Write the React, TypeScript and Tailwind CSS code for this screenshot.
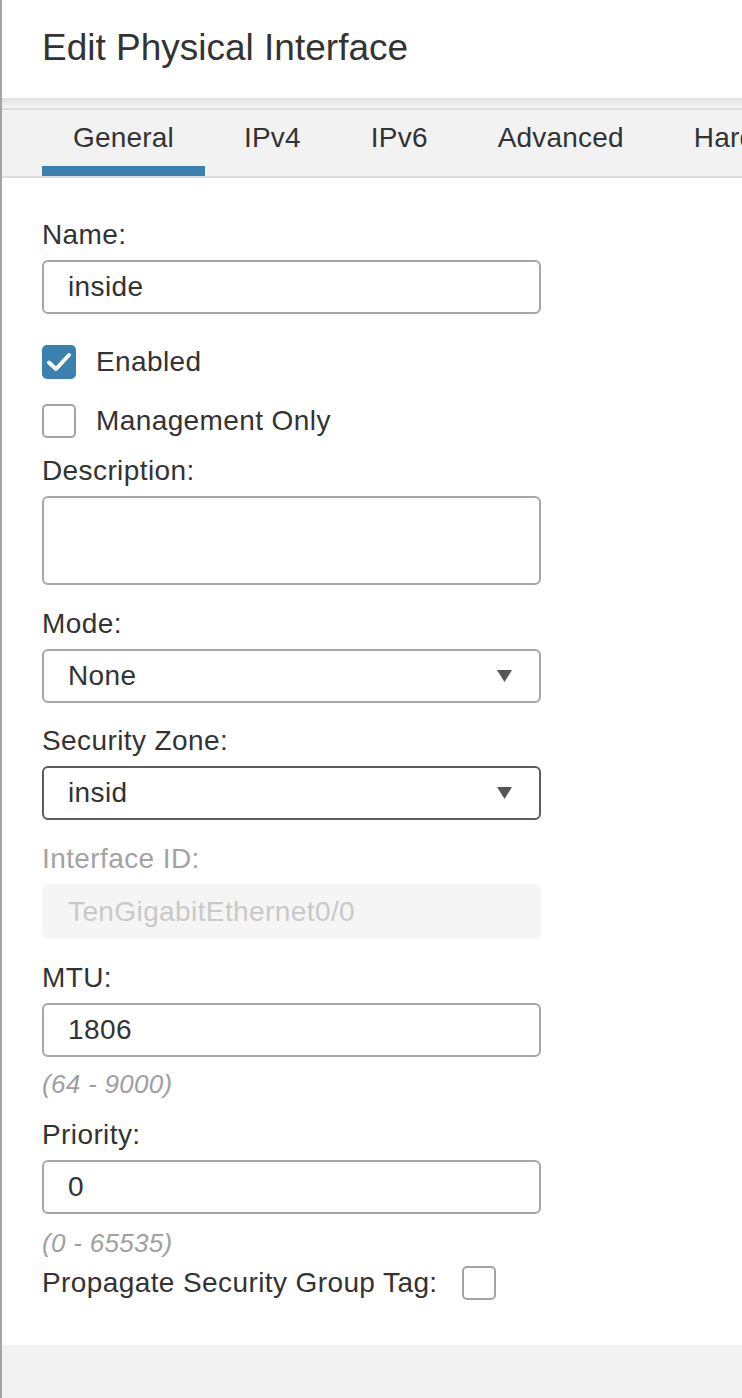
import React from "react";

const tabs = ["General", "IPv4", "IPv6", "Advanced", "Hardware Configuration"];

const Label = ({ children, muted }: { children: React.ReactNode; muted?: boolean }) => (
  <div
    className={`text-[28px] leading-[28px] tracking-[0.4px] mb-[11px] ${
      muted ? "text-[#a3a3a3]" : "text-[#333]"
    }`}
  >
    {children}
  </div>
);

const TextBox = ({ value }: { value: string }) => (
  <div className="w-[499px] h-[54px] border-2 border-[#a6a6a6] rounded-[6px] flex items-center px-[24px] text-[28px] leading-[28px] text-[#333] tracking-[0.4px]">
    {value}
  </div>
);

const Select = ({ value, dark }: { value: string; dark?: boolean }) => (
  <div
    className={`w-[499px] h-[54px] border-2 rounded-[6px] flex items-center justify-between pl-[24px] pr-[27px] text-[28px] leading-[28px] text-[#333] tracking-[0.4px] ${
      dark ? "border-[#5c5c5c]" : "border-[#a6a6a6]"
    }`}
  >
    <span>{value}</span>
    <svg width="15" height="12" viewBox="0 0 15 12">
      <path d="M0 0 L15 0 L7.5 12 Z" fill="#555" />
    </svg>
  </div>
);

const Hint = ({ children }: { children: React.ReactNode }) => (
  <div className="text-[26px] leading-[26px] italic text-[#a0a0a0] tracking-[0.3px]">{children}</div>
);

const CheckBox = ({ checked }: { checked?: boolean }) =>
  checked ? (
    <div className="w-[34px] h-[34px] rounded-[5px] bg-[#3a81b0] flex items-center justify-center">
      <svg width="26" height="22" viewBox="0 0 26 22">
        <path d="M3 11.5 L10 18 L23 4" fill="none" stroke="#fff" strokeWidth="4" strokeLinecap="round" strokeLinejoin="round" />
      </svg>
    </div>
  ) : (
    <div className="w-[34px] h-[34px] rounded-[5px] border-2 border-[#a3a3a3] bg-white" />
  );

const App = () => {
  return (
    <div
      className="w-[742px] h-[1398px] bg-white border-l-2 border-[#a5a5a5] flex flex-col overflow-hidden"
      style={{ fontFamily: '"Liberation Sans", Arial, sans-serif' }}
    >
      {/* header */}
      <div className="h-[98px] pl-[40px] pt-[29px] bg-white">
        <h1 className="text-[37px] leading-[37px] text-[#333]">Edit Physical Interface</h1>
      </div>
      <div className="h-[10px] bg-linear-to-b from-[#e1e1e1] to-[#f6f6f6]" />

      {/* tabs */}
      <div className="border-t-2 border-b-2 border-[#dcdcdc] bg-[#f2f2f2] pl-[40px] flex gap-[8px] whitespace-nowrap overflow-hidden">
        {tabs.map((t, i) => (
          <div key={t} className="flex flex-col items-stretch shrink-0">
            <div className="px-[31px] pt-[14px] text-[28px] leading-[28px] text-[#333] tracking-[0.2px]">{t}</div>
            <div className={`mt-[14px] h-[10px] ${i === 0 ? "bg-[#3a81b0]" : ""}`} />
          </div>
        ))}
      </div>

      {/* form */}
      <div className="flex-1 pl-[40px] pt-[43px]">
        <Label>Name:</Label>
        <TextBox value="inside" />

        <div className="mt-[31px] flex items-center gap-[20px] text-[28px] leading-[34px] text-[#333] tracking-[0.4px]">
          <CheckBox checked />
          <span>Enabled</span>
        </div>
        <div className="mt-[25px] flex items-center gap-[20px] text-[28px] leading-[34px] text-[#333] tracking-[0.4px]">
          <CheckBox />
          <span>Management Only</span>
        </div>

        <div className="mt-[19px]">
          <Label>Description:</Label>
          <div className="w-[499px] h-[89px] border-2 border-[#a6a6a6] rounded-[6px]" />
        </div>

        <div className="mt-[25px]">
          <Label>Mode:</Label>
          <Select value="None" />
        </div>

        <div className="mt-[24px]">
          <Label>Security Zone:</Label>
          <Select value="insid" dark />
        </div>

        <div className="mt-[25px]">
          <Label muted>Interface ID:</Label>
          <div className="w-[499px] h-[55px] rounded-[6px] bg-[#f5f5f5] flex items-center px-[26px] text-[28px] leading-[28px] text-[#c9c9c9] tracking-[0.4px]">
            TenGigabitEthernet0/0
          </div>
        </div>

        <div className="mt-[25px]">
          <Label>MTU:</Label>
          <TextBox value="1806" />
        </div>
        <div className="mt-[14px]">
          <Hint>(64 - 9000)</Hint>
        </div>

        <div className="mt-[24px]">
          <Label>Priority:</Label>
          <TextBox value="0" />
        </div>
        <div className="mt-[16px]">
          <Hint>(0 - 65535)</Hint>
        </div>

        <div className="mt-[10px] flex items-center gap-[24px] text-[28px] leading-[34px] text-[#333] tracking-[0.4px]">
          <span>Propagate Security Group Tag:</span>
          <CheckBox />
        </div>
      </div>

      {/* footer */}
      <div className="h-[53px] bg-[#f2f2f2]" />
    </div>
  );
};

export default App;
